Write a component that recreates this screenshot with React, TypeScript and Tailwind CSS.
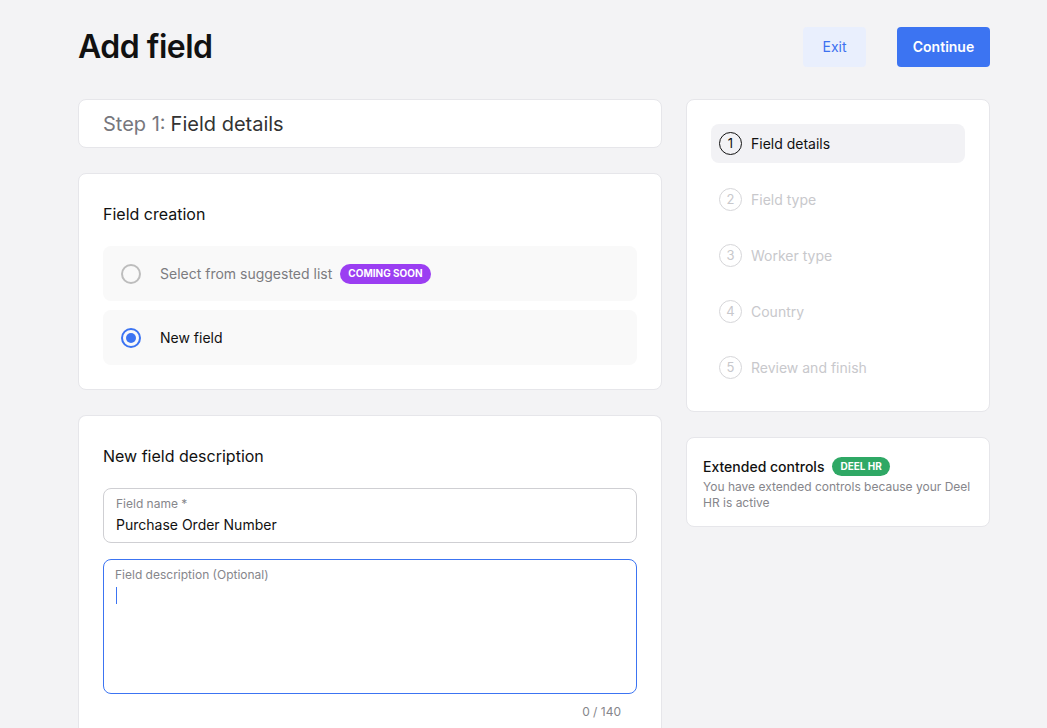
import React from 'react';

const steps = ['Field details', 'Field type', 'Worker type', 'Country', 'Review and finish'];

export default function App() {
  return (
    <div className="min-h-screen bg-[#f3f3f5] font-['Inter',sans-serif] text-[#111]">
      <div className="w-[912px] ml-[78px] pt-[27px]">
        <div className="flex items-center justify-between h-[40px]">
          <h1 className="text-[32px] font-semibold tracking-[-0.5px] leading-none">Add field</h1>
          <div className="flex items-center gap-[31px]">
            <button className="h-[40px] w-[63px] rounded-[4px] bg-[#e9effd] text-[14px] text-[#3d72f0] leading-none">Exit</button>
            <button className="h-[40px] w-[93px] rounded-[4px] bg-[#3c74f2] text-[14px] font-semibold text-white leading-none">Continue</button>
          </div>
        </div>

        <div className="flex gap-[24px] mt-[32px] items-start">
          <div className="w-[584px] flex flex-col gap-[25px]">
            <div className="h-[49px] rounded-[8px] bg-white border border-[#e6e6ea] flex items-center px-[24px] text-[20px]">
              <span className="text-[#77777d]">Step 1:</span>
              <span className="text-[#333] ml-[5px]">Field details</span>
            </div>

            <div className="rounded-[8px] bg-white border border-[#e6e6ea] px-[24px] pt-[28px] pb-[24px]">
              <h2 className="text-[16px] font-normal leading-[24px]">Field creation</h2>
              <div className="mt-[20px] flex flex-col gap-[9px]">
                <div className="h-[55px] rounded-[8px] bg-[#f9f9f9] flex items-center pl-[18px]">
                  <span className="w-[20px] h-[20px] rounded-full border-2 border-[#bdbdbd]" />
                  <span className="ml-[19px] text-[14px] text-[#7c7c80]">Select from suggested list</span>
                  <span className="ml-[8px] rounded-full bg-[#9b3ef2] text-white text-[10px] font-bold px-[8px] h-[20px] flex items-center">COMING SOON</span>
                </div>
                <div className="h-[55px] rounded-[8px] bg-[#f9f9f9] flex items-center pl-[18px]">
                  <span className="w-[20px] h-[20px] rounded-full border-2 border-[#3c74f2] flex items-center justify-center">
                    <span className="w-[10px] h-[10px] rounded-full bg-[#3c74f2]" />
                  </span>
                  <span className="ml-[19px] text-[14px] text-[#111]">New field</span>
                </div>
              </div>
            </div>

            <div className="rounded-t-[8px] bg-white border border-[#e6e6ea] border-b-0 px-[24px] pt-[28px] pb-[24px]">
              <h2 className="text-[16px] font-normal leading-[24px]">New field description</h2>
              <div className="mt-[20px] h-[55px] rounded-[8px] border border-[#cfcfd3] px-[12px] pt-[7px]">
                <div className="text-[12px] text-[#86868b] leading-[16px]">Field name *</div>
                <div className="text-[14px] text-[#111] leading-[20px] mt-[3px]">Purchase Order Number</div>
              </div>
              <div className="mt-[16px] h-[135px] rounded-[8px] border border-[#3c74f2] px-[11px] pt-[7px]">
                <div className="text-[12px] text-[#86868b] leading-[16px]">Field description (Optional)</div>
                <div className="mt-[4px] w-[1px] h-[17px] bg-[#3c74f2] ml-[1px]" />
              </div>
              <div className="mt-[9px] text-right pr-[16px] text-[12px] text-[#86868b]">0 / 140</div>
            </div>
          </div>

          <div className="w-[304px] flex flex-col gap-[25px]">
            <div className="rounded-[8px] bg-white border border-[#e6e6ea] p-[24px] flex flex-col gap-[17px]">
              {steps.map((s, i) => (
                <div
                  key={s}
                  className={`h-[39px] rounded-[8px] flex items-center pl-[8px] ${i === 0 ? 'bg-[#f2f2f5]' : ''}`}
                >
                  <span
                    className={`w-[23px] h-[23px] rounded-full border flex items-center justify-center text-[13px] ${i === 0 ? 'border-[#111] text-[#111]' : 'border-[#d6d6d9] text-[#c8c8cc]'}`}
                  >
                    {i + 1}
                  </span>
                  <span className={`ml-[9px] text-[14px] ${i === 0 ? 'text-[#111]' : 'text-[#c8c8cc]'}`}>{s}</span>
                </div>
              ))}
            </div>

            <div className="rounded-[8px] bg-white border border-[#e6e6ea] px-[16px] pt-[18px] pb-[15px]">
              <div className="flex items-center gap-[8px] h-[20px]">
                <span className="text-[14px] font-medium text-[#111]">Extended controls</span>
                <span className="rounded-full bg-[#2fa865] text-white text-[10px] font-bold px-[8px] h-[19px] flex items-center">DEEL HR</span>
              </div>
              <p className="text-[12px] leading-[16px] text-[#86868b] mt-[3px]">
                You have extended controls because your Deel HR is active
              </p>
            </div>
          </div>
        </div>
      </div>
    </div>
  );
}
